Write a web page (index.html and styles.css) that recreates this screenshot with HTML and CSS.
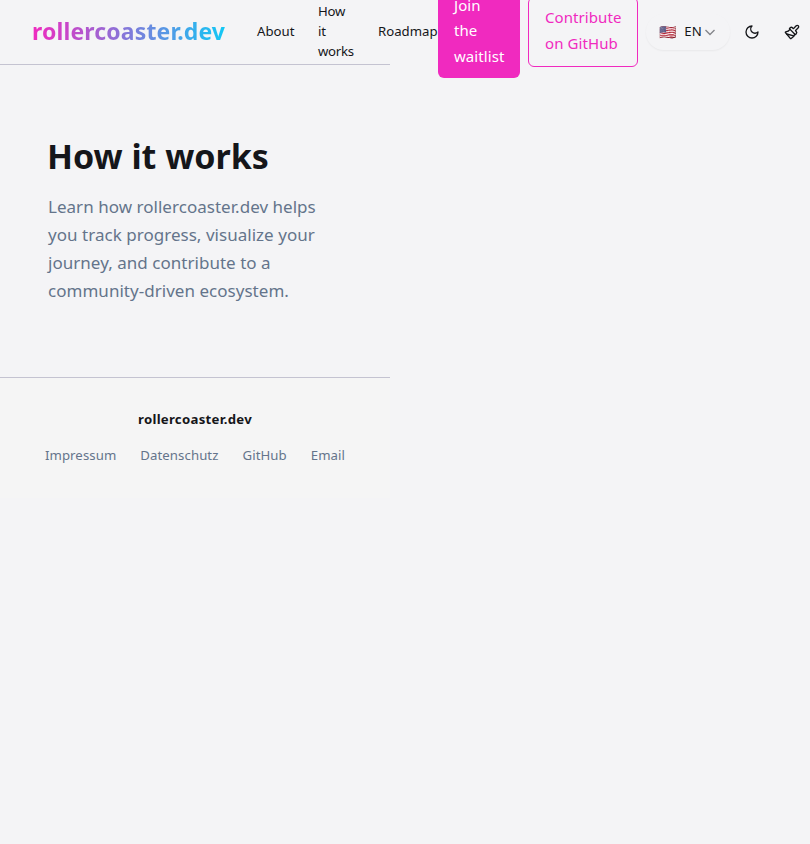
FILE: index.html
```html
<!DOCTYPE html>
<html lang="en">
<head>
<meta charset="utf-8">
<title>How it works</title>
<link rel="stylesheet" href="styles.css">
</head>
<body>
<header class="header">
  <a class="logo">rollercoaster.dev</a>
  <nav class="nav">
    <a class="about">About</a>
    <a class="how">How it works</a>
    <a class="roadmap">Roadmap</a>
  </nav>
  <div class="actions">
    <a class="button primary">Join the waitlist</a>
    <a class="button outline">Contribute on GitHub</a>
    <button class="language"><span class="flag">🇺🇸</span><span class="code">EN</span>
      <svg class="chevron" viewBox="0 0 12 12"><path d="M1.5 4 6 8.5 10.500 4"/></svg>
    </button>
    <div class="tools">
      <button class="tool" aria-label="Dark mode"><svg viewBox="0 0 24 24"><path d="M12 3a6 6 0 0 0 9 9 9 9 0 1 1-9-9Z"/></svg></button>
      <button class="tool theme" aria-label="Theme"><svg viewBox="0 0 24 24"><path d="m14.622 17.897-10.680-2.913"/><path d="M18.376 2.622a1 1 0 1 1 3.002 3.002L17.360 9.643a.5.5 0 0 0 0 .707l.944.944a2.410 2.410 0 0 1 0 3.408l-.944.944a.5.5 0 0 1-.707 0L8.354 7.348a.5.5 0 0 1 0-.707l.944-.944a2.410 2.410 0 0 1 3.408 0l.944.944a.5.5 0 0 0 .707 0z"/><path d="M9 8c-1.804 2.710-3.970 3.460-6.583 3.948a.507.507 0 0 0-.302.819l7.320 8.883a1 1 0 0 0 1.185.204C12.735 20.405 16 16.792 16 15"/></svg></button>
    </div>
  </div>
</header>
<main class="main">
  <h1>How it works</h1>
  <p>Learn how rollercoaster.dev helps you track progress, visualize your journey, and contribute to a community-driven ecosystem.</p>
</main>
<footer class="footer">
  <strong>rollercoaster.dev</strong>
  <nav class="links"><a>Impressum</a><a>Datenschutz</a><a>GitHub</a><a>Email</a></nav>
</footer>
</body>
</html>
```
FILE: styles.css
```css
* { box-sizing: border-box; }
html { background: #f4f4f6; }
body {
  margin: 0;
  font-family: "Noto Sans", sans-serif;
  color: #15161a;
}
.header, .main, .footer { width: 390px; }
.header {
  display: flex;
  align-items: center;
  height: 65px;
  padding-left: 32px;
  border-bottom: 1px solid #c4c3d1;
}
.header > * { flex-shrink: 0; }
.logo {
  width: 193px;
  margin-right: 32px;
  padding-bottom: 2px;
  font-size: 23px;
  font-weight: 700;
  line-height: 32px;
  letter-spacing: 0.14px;
  white-space: nowrap;
  color: transparent;
  background: linear-gradient(90deg, #f02abf, #12c8f5);
  background-clip: text;
}
.nav {
  display: flex;
  align-items: center;
  gap: 24px;
  width: 181px;
  padding-bottom: 2px;
  font-size: 13.2px;
  line-height: 20px;
}
.about { width: 37px; }
.how { width: 36px; letter-spacing: -0.25px; }
.roadmap { width: 60px; }
.actions { display: flex; align-items: center; gap: 8px; }
.button {
  padding: 7px 16px 9px;
  border-radius: 6px;
  font-size: 15px;
  line-height: 25.6px;
  letter-spacing: 0.08px;
}
.primary { width: 82px; color: #fff; background: #f02abf; }
.outline { width: 110px; color: #f02abf; border: 1px solid #f02abf; }
button { border: 0; padding: 0; background: none; font: inherit; color: inherit; }
.language {
  display: flex;
  align-items: center;
  width: 84px;
  height: 36px;
  padding: 0 0 1px 13px;
  border-radius: 18px;
  box-shadow: 0 1px 2px #0000000d;
  font-size: 13.2px;
  line-height: 20px;
}
.flag { width: 25px; text-align: left; font-size: 14px; }
.code { width: 18px; padding-bottom: 1px; }
.chevron { width: 12px; height: 12px; margin-left: 2px; fill: none; stroke: #85868b; stroke-width: 1.4; }
.tools { display: flex; margin-left: -6px; }
.tool { display: grid; place-items: center; width: 40px; height: 40px; }
.theme { width: 38px; padding-left: 2px; }
.tool svg {
  width: 16px;
  height: 16px;
  fill: none;
  stroke: currentColor;
  stroke-width: 2;
  stroke-linecap: round;
  stroke-linejoin: round;
}
.main { padding: 71px 48px 72px; }
h1 { margin: 0 0 17px -1px; font-size: 34px; line-height: 40px; letter-spacing: -0.02px; white-space: nowrap; }
p { margin: 0; font-size: 17px; line-height: 28px; letter-spacing: 0.03px; color: #64748b; }
.footer {
  display: flex;
  flex-direction: column;
  align-items: center;
  gap: 16px;
  padding: 31px 0 33px;
  border-top: 1px solid #c4c3d1;
  background: #f5f5f5;
  font-size: 13.2px;
  line-height: 20px;
}
.footer strong { letter-spacing: 0.27px; }
.links { display: flex; gap: 24px; letter-spacing: 0.08px; color: #64748b; }
```
